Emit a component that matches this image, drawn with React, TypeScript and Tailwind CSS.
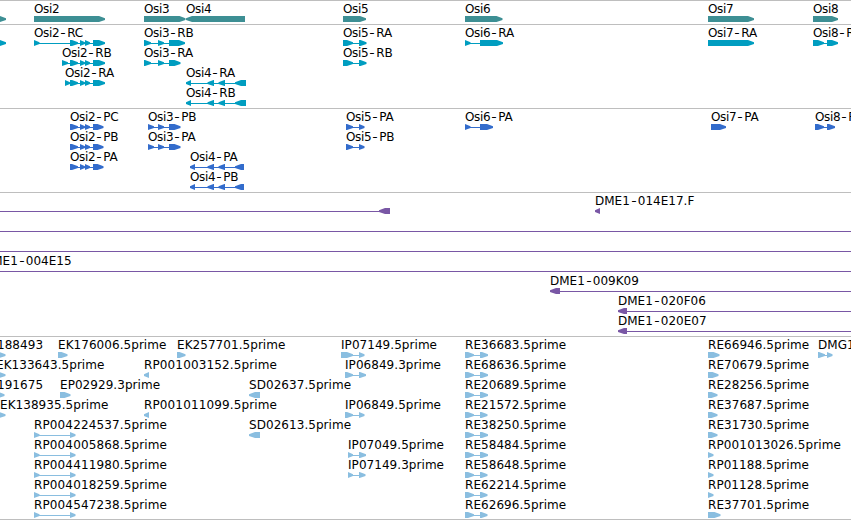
type Span = [number, number];

type Feature = {
  x: number;
  label?: string;
  spans: Span[];
  reverse?: boolean;
};

type Track = {
  name: string;
  color: string;
  rows: Feature[][];
};

const WIDTH = 851;

const f = (x: number, label: string, ...spans: Span[]): Feature => ({ x, label, spans });
const r = (x: number, label: string, ...spans: Span[]): Feature => ({ x, label, spans, reverse: true });

const OSI2_TAIL: Span[] = [[70, 78], [80, 85], [85, 90]];
const OSI4_MID: Span[] = [[207.5, 214], [218.5, 225]];

// The 5' reads around Osi2 and Osi6 all share the same splice
const osi2Read = (label: string) => f(34, label, [34, 39.5], [70, 75.5]);
const osi6Read = (label: string, end: number) => f(465, label, [465, 474], [480, end]);
const osi7Read = (label: string, end: number) => f(708, label, [708, end]);

const TRACKS: Track[] = [
  {
    name: 'genes',
    color: 'text-[#3d8f94]',
    rows: [
      [
        f(-20, '', [-20, 6]),
        f(34, 'Osi2', [34, 105]),
        f(144, 'Osi3', [144, 185.5]),
        r(186, 'Osi4', [186, 245]),
        f(343, 'Osi5', [343, 366]),
        f(465, 'Osi6', [465, 502.5]),
        f(708, 'Osi7', [708, 754]),
        f(813, 'Osi8', [813, 838]),
      ],
    ],
  },
  {
    name: 'transcripts',
    color: 'text-[#009dc0]',
    rows: [
      [
        f(-20, '', [-20, 6]),
        f(34, 'Osi2-RC', [34, 39.5], ...OSI2_TAIL, [93, 105]),
        f(144, 'Osi3-RB', [144, 151], [158, 164], [169, 185]),
        f(343, 'Osi5-RA', [343, 353], [359, 366.5]),
        f(465, 'Osi6-RA', [465, 470.5], [480, 503]),
        f(708, 'Osi7-RA', [708, 754]),
        f(813, 'Osi8-RA', [813, 824], [827, 838]),
      ],
      [
        f(62, 'Osi2-RB', [62, 68], ...OSI2_TAIL, [93, 105]),
        f(144, 'Osi3-RA', [144, 151], [158, 164], [169, 180.5]),
        f(343, 'Osi5-RB', [343, 353], [359, 366.5]),
      ],
      [
        f(65, 'Osi2-RA', [65, 70], ...OSI2_TAIL, [93, 105]),
        r(186, 'Osi4-RA', [186, 191], ...OSI4_MID, [235, 246]),
      ],
      [r(186, 'Osi4-RB', [186, 191], ...OSI4_MID, [235, 246])],
    ],
  },
  {
    name: 'proteins',
    color: 'text-[#336ccc]',
    rows: [
      [
        f(70, 'Osi2-PC', ...OSI2_TAIL, [93, 103.5]),
        f(148, 'Osi3-PB', [148, 154], [158, 164], [169, 180.5]),
        f(346, 'Osi5-PA', [346, 353], [359, 364.5]),
        f(465, 'Osi6-PA', [465, 470.5], [480, 493]),
        f(711, 'Osi7-PA', [711, 726]),
        f(815, 'Osi8-PA', [815, 824], [827, 835]),
      ],
      [
        f(70, 'Osi2-PB', ...OSI2_TAIL, [93, 103.5]),
        f(148, 'Osi3-PA', [148, 154], [158, 164], [169, 180.5]),
        f(346, 'Osi5-PB', [346, 353], [359, 364.5]),
      ],
      [
        f(70, 'Osi2-PA', ...OSI2_TAIL, [93, 103.5]),
        r(190, 'Osi4-PA', [190, 195], ...OSI4_MID, [235, 244]),
      ],
      [r(190, 'Osi4-PB', [190, 195], ...OSI4_MID, [235, 244])],
    ],
  },
  {
    name: 'bacs',
    color: 'text-[#7957a5]',
    rows: [
      [r(-40, '', [-40, -30], [379, 390]), r(595, 'DME1-014E17.F', [595, 600])],
      [r(-40, '', [-40, -30], [880, 890])],
      [r(-40, '', [-40, -30], [880, 890])],
      [r(-17, 'DME1-004E15', [-17, -7], [880, 890])],
      [r(550, 'DME1-009K09', [550, 560], [880, 890])],
      [r(618, 'DME1-020F06', [618, 627], [880, 890])],
      [r(618, 'DME1-020E07', [618, 627], [880, 890])],
    ],
  },
  {
    name: 'ests',
    color: 'text-[#8abee0]',
    rows: [
      [
        f(-3, '188493', [-5, 5.5]),
        f(58, 'EK176006.5prime', [58, 67.5]),
        f(177, 'EK257701.5prime', [177, 185.5]),
        f(341, 'IP07149.5prime', [341, 353], [359, 364.5]),
        osi6Read('RE36683.5prime', 488),
        osi7Read('RE66946.5prime', 719.5),
        f(818, 'DMG1', [818, 825], [827, 832.5]),
      ],
      [
        f(-4, 'EK133643.5prime', [-5, 5.5]),
        r(144, 'RP001003152.5prime', [144, 149]),
        f(345, 'IP06849.3prime', [345, 353], [359, 366]),
        osi6Read('RE68636.5prime', 488),
        osi7Read('RE70679.5prime', 718.5),
      ],
      [
        f(-3, '191675', [-5, 4.5]),
        f(60, 'EP02929.3prime', [60, 70.5]),
        r(249, 'SD02637.5prime', [249, 260]),
        osi6Read('RE20689.5prime', 488),
        osi7Read('RE28256.5prime', 717.5),
      ],
      [
        f(0, 'EK138935.5prime', [-5, 5.5]),
        r(144, 'RP001011099.5prime', [144, 149]),
        f(345, 'IP06849.5prime', [345, 353], [359, 364.5]),
        osi6Read('RE21572.5prime', 487.5),
        osi7Read('RE37687.5prime', 717.5),
      ],
      [
        osi2Read('RP004224537.5prime'),
        r(249, 'SD02613.5prime', [249, 260]),
        osi6Read('RE38250.5prime', 488),
        osi7Read('RE31730.5prime', 717.5),
      ],
      [
        osi2Read('RP004005868.5prime'),
        f(348, 'IP07049.5prime', [348, 353], [359, 366]),
        osi6Read('RE58484.5prime', 488),
        osi7Read('RP001013026.5prime', 713.5),
      ],
      [
        osi2Read('RP004411980.5prime'),
        f(348, 'IP07149.3prime', [348, 353], [359, 365.5]),
        osi6Read('RE58648.5prime', 487.5),
        osi7Read('RP01188.5prime', 713.5),
      ],
      [
        osi2Read('RP004018259.5prime'),
        osi6Read('RE62214.5prime', 487.5),
        osi7Read('RP01128.5prime', 713.5),
      ],
      [
        osi2Read('RP004547238.5prime'),
        osi6Read('RE62696.5prime', 487.5),
        osi7Read('RE37701.5prime', 720.5),
      ],
    ],
  },
];

function exonPoints([a, b]: Span, reverse?: boolean) {
  const head = Math.min(b - a, 6);
  if (reverse) {
    return `${b},0 ${a + head},0 ${a},2.3 ${a},3.9 ${a + head},6 ${b},6`;
  }
  return `${a},0 ${b - head},0 ${b},2.3 ${b},3.9 ${b - head},6 ${a},6`;
}

function Glyph({ feature }: { feature: Feature }) {
  const { spans, reverse } = feature;
  const start = spans[0][0];
  const end = spans[spans.length - 1][1];
  return (
    <g>
      {spans.length > 1 && (
        <rect x={start} y={3} width={end - start - 1} height={1} shapeRendering="crispEdges" />
      )}
      {spans.map((span, i) => (
        <polygon key={i} points={exonPoints(span, reverse)} />
      ))}
    </g>
  );
}

function Label({ text }: { text: string }) {
  const [head, tail] = text.split('-');
  if (head.startsWith('Osi')) {
    return (
      <>
        <span className="tracking-[-0.35px]">{head}</span>
        {tail && <span className="inline-block w-[8px] scale-x-125 text-center">-</span>}
        {tail && <span className="tracking-[-0.2px]">{tail}</span>}
      </>
    );
  }
  if (tail) {
    return (
      <>
        {head}
        <span className="inline-block w-[8px] scale-x-125 text-center">-</span>
        {tail}
      </>
    );
  }
  return <span className={text.startsWith('RP00') ? 'tracking-[0.13px]' : 'tracking-[0.05px]'}>{text}</span>;
}

function Row({ features }: { features: Feature[] }) {
  return (
    <div className="relative h-5 w-full">
      <svg className="absolute left-0 top-[15px]" width={WIDTH} height={6} fill="currentColor">
        {features.map((feature, i) => (
          <Glyph key={i} feature={feature} />
        ))}
      </svg>
      {features.map((feature, i) =>
        feature.label ? (
          <span
            key={i}
            className="absolute top-[2px] whitespace-nowrap leading-3 text-black"
            style={{ left: feature.x }}
          >
            <Label text={feature.label} />
          </span>
        ) : null
      )}
    </div>
  );
}

export default function App() {
  return (
    <div className="h-[520px] w-[851px] overflow-hidden bg-white font-['DejaVu_Sans',sans-serif] text-[12px]">
      <div className="flex h-full flex-col border-b border-[#bebebe]">
        {TRACKS.map((track) => (
          <section
            key={track.name}
            className={`shrink-0 border-t border-[#bebebe] pb-[3px] last:pb-0 ${track.color}`}
          >
            {track.rows.map((features, i) => (
              <Row key={i} features={features} />
            ))}
          </section>
        ))}
      </div>
    </div>
  );
}
